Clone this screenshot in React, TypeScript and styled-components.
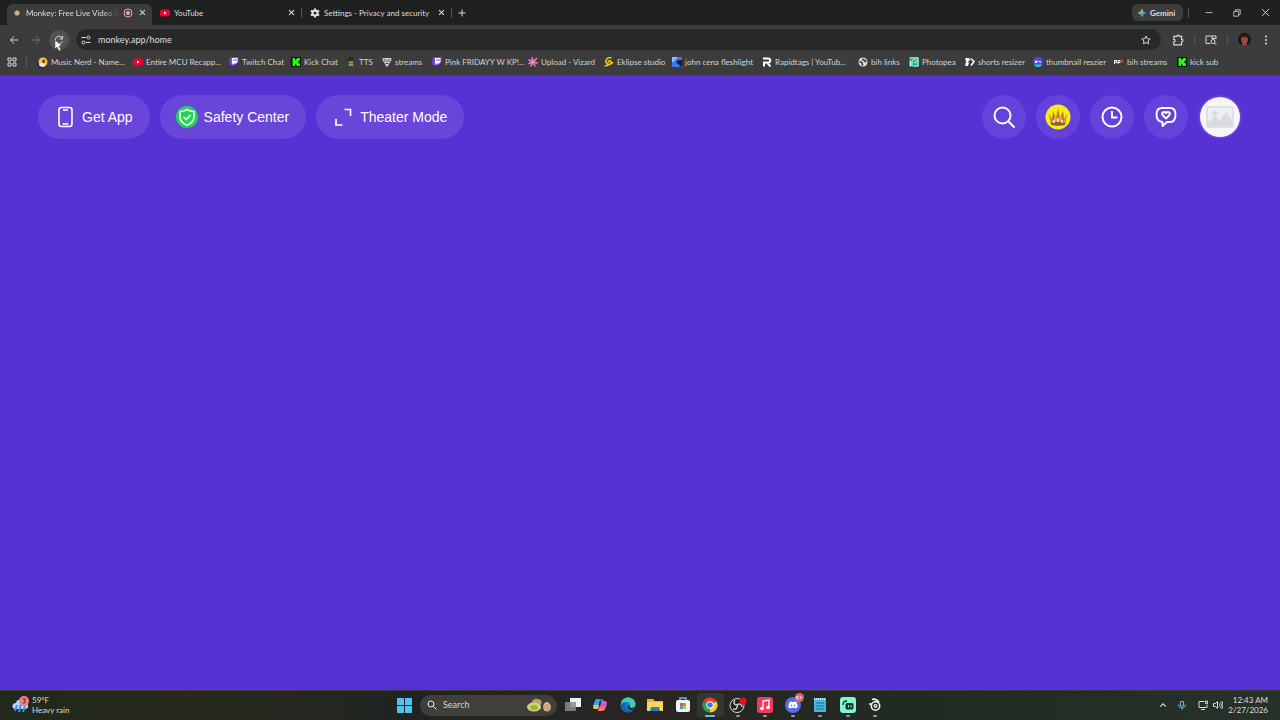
import React from "react";
import styled, { createGlobalStyle } from "styled-components";
import { FaDiscord } from "react-icons/fa";

const ui = `Lato, "Open Sans", sans-serif`;

const GlobalStyle = createGlobalStyle`
  *, *::before, *::after { box-sizing: border-box; }
  body { margin: 0; background: #5730d6; }
  button, input { font: inherit; color: inherit; border: 0; padding: 0; margin: 0; background: none; }
  svg { display: block; flex: none; }
`;

const Screen = styled.div`
  display: flex;
  flex-direction: column;
  min-height: 100vh;
  font-family: ${ui};
  font-size: 8px;
  line-height: 12px;
  color: #dedede;
`;

/* ---------- browser chrome ---------- */

const TabStrip = styled.div`
  display: flex;
  height: 25px;
  padding: 4px 10px 0 7px;
  background: #1f2120;
`;

const Tab = styled.div<{ $active?: boolean; $width: number }>`
  display: flex;
  flex: none;
  align-items: center;
  gap: 4px;
  width: ${(p) => p.$width}px;
  height: 21px;
  padding: 0 5px 4px ${(p) => (p.$active ? 5 : 8)}px;
  border-radius: 6px 6px 0 0;
  background: ${(p) => (p.$active ? "#3c3c3c" : "transparent")};
`;

const TabTitle = styled.span<{ $fade?: boolean }>`
  flex: 1;
  min-width: 0;
  white-space: nowrap;
  ${(p) => p.$fade && "mask-image: linear-gradient(90deg, #000 82%, transparent);"}
`;

const Divider = styled.span`
  flex: none;
  width: 1px;
  height: 10px;
  background: #555655;
`;

const StripDivider = styled(Divider)`
  margin-top: 4px;
`;

const StripEnd = styled.div`
  display: flex;
  flex: 1;
  align-items: center;
  height: 17px;
`;

const IconButton = styled.button<{ $size?: number; $filled?: boolean }>`
  display: flex;
  flex: none;
  align-items: center;
  justify-content: center;
  width: ${(p) => p.$size ?? 10}px;
  height: ${(p) => p.$size ?? 10}px;
  border-radius: 50%;
  background: ${(p) => (p.$filled ? "#525252" : "transparent")};
`;

const NewTab = styled(IconButton)`
  margin: 0 auto 0 5px;
`;

const Gemini = styled.button`
  display: flex;
  align-items: center;
  gap: 3px;
  width: 51px;
  height: 17px;
  margin-right: 5px;
  padding: 0 5px;
  border-radius: 6px;
  background: #3c3d3c;
  font-weight: 700;
`;

const WindowControls = styled.div`
  display: flex;
  align-items: center;
  gap: 18px;
  margin-left: 15px;
`;

const Toolbar = styled.div`
  display: flex;
  align-items: center;
  height: 29px;
  padding: 0 9px 0 3px;
  background: #3c3c3c;
`;

const Reload = styled.div`
  position: relative;
  margin: 0 7px 0 2px;
`;

const Cursor = styled.svg`
  position: absolute;
  left: 6px;
  top: 10px;
`;

const Address = styled.div`
  display: flex;
  flex: 1;
  align-items: center;
  gap: 4px;
  height: 21px;
  padding: 0 10px 0 1px;
  border-radius: 11px;
  background: #282828;
`;

const UrlInput = styled.input`
  flex: 1;
  min-width: 0;
  outline: none;
  font-size: 9px;
`;

const ToolbarEnd = styled.div`
  display: flex;
  align-items: center;
  gap: 10px;
  margin-left: 11px;
`;

const Bookmarks = styled.nav`
  display: flex;
  align-items: center;
  height: 22px;
  padding: 0 8px 5px 7px;
  border-bottom: 1px solid #45398c;
  background: #3c3c3c;
`;

const BookmarkSeparator = styled(Divider)`
  margin: 0 10px 0 9px;
`;

const Bookmark = styled.a<{ $width: number }>`
  display: flex;
  align-items: center;
  gap: 3px;
  width: ${(p) => p.$width}px;
  flex: none;
  white-space: nowrap;
  color: #d4d4d4;
  text-decoration: none;
`;

/* ---------- page ---------- */

const Page = styled.main`
  flex: 1;
  background: #5730d6;
`;

const PageHeader = styled.header`
  display: flex;
  justify-content: space-between;
  padding: 19px 38px;
`;

const Group = styled.div`
  display: flex;
  gap: 10px;
`;

const PillButton = styled.button`
  display: flex;
  align-items: center;
  gap: 6px;
  height: 44px;
  padding: 0 17px 0 16px;
  border-radius: 22px;
  background: #6945da;
  color: #fff;
  font: 14px/20px "Liberation Sans", Arial, sans-serif;
`;

const RoundButton = styled.button`
  display: flex;
  align-items: center;
  justify-content: center;
  width: 44px;
  height: 44px;
  border-radius: 50%;
  background: #6443da;
`;

const AvatarDisc = styled.span`
  display: flex;
  align-items: center;
  justify-content: center;
  width: 40px;
  height: 40px;
  border-radius: 50%;
  background: #f6f6fa;
`;

/* ---------- taskbar ---------- */

const Taskbar = styled.footer`
  display: grid;
  grid-template-columns: 1fr auto 1fr;
  align-items: center;
  height: 30px;
  padding: 0 12px 1px;
  border-top: 1px solid #393b3b;
  background: linear-gradient(90deg, #20291b, #292820 18%, #1f2421 32%, #292523 52%, #202c21 72%, #28302a);
`;

const Weather = styled.button`
  display: flex;
  align-items: center;
  gap: 3px;
  text-align: left;
  line-height: 10px;
`;

const Line = styled.span`
  display: block;
`;

const Center = styled.div`
  display: flex;
  align-items: center;
  padding-left: 6px;
`;

const Search = styled.label`
  display: flex;
  align-items: center;
  gap: 6px;
  width: 137px;
  height: 21px;
  margin: 0 2px 0 8px;
  padding: 0 5px 0 7px;
  border-radius: 11px;
  background: #403f3b;
`;

const SearchInput = styled.input`
  flex: 1;
  min-width: 0;
  outline: none;
  font-size: 9px;
  &::placeholder { color: #d5d5d5; opacity: 1; }
`;

const Apps = styled.div`
  display: flex;
  width: 330px;
`;

const AppButton = styled.button<{ $state?: "open" | "active" }>`
  position: relative;
  display: flex;
  flex: 1;
  align-items: center;
  justify-content: center;
  height: 24px;
  border-radius: 3px;
  background: ${(p) => (p.$state === "active" ? "#343632" : "transparent")};
  &::after {
    content: "";
    display: ${(p) => (p.$state ? "block" : "none")};
    position: absolute;
    bottom: 0;
    width: ${(p) => (p.$state === "active" ? 10 : 4)}px;
    height: 2px;
    border-radius: 1px;
    background: ${(p) => (p.$state === "active" ? "#5cc3ee" : "#9a9b98")};
  }
`;

const Badge = styled.span`
  position: absolute;
  top: 0;
  right: 3px;
  width: 9px;
  height: 9px;
  border-radius: 50%;
  background: #d9656b;
  color: #fff;
  font-size: 6px;
  line-height: 9px;
`;

const DiscordDisc = styled.span`
  display: flex;
  align-items: center;
  justify-content: center;
  width: 16px;
  height: 16px;
  border-radius: 50%;
  background: #5b6be8;
  color: #fff;
`;

const Tray = styled.div`
  display: flex;
  align-items: center;
  justify-content: flex-end;
`;

const TrayIcon = styled(IconButton)<{ $gap: number }>`
  margin-right: ${(p) => p.$gap}px;
`;

const Clock = styled.button`
  width: 40px;
  text-align: right;
  white-space: nowrap;
  line-height: 10px;
`;

/* ---------- icons ---------- */

type LineProps = { d: string; size?: number; w?: number; color?: string };
const Stroke = ({ d, size = 10, w = 2, color = "#d8d8d8" }: LineProps) => (
  <svg width={size} height={size} viewBox="0 0 20 20" fill="none" stroke={color} strokeWidth={w}>
    <path d={d} />
  </svg>
);

const Close = () => <Stroke size={7} w={3} d="M3 3 17 17M17 3 3 17" />;

const MonkeyDot = () => (
  <svg width="10" height="10" viewBox="0 0 20 20">
    <path d="M10 4v12M4 10h12M6 6l8 8M14 6l-8 8" stroke="#8d7655" strokeWidth="2" />
    <circle cx="10" cy="10" r="5" fill="#c8ad84" />
  </svg>
);

const Recording = () => (
  <svg width="10" height="10" viewBox="0 0 20 20" fill="none" stroke="#eda7b1" strokeWidth="2">
    <circle cx="10" cy="10" r="8" />
    <circle cx="10" cy="10" r="4" fill="#f3a9b4" stroke="none" />
  </svg>
);

const YouTube = () => (
  <svg width="10" height="10" viewBox="0 0 20 20">
    <rect y="3" width="20" height="14" rx="5" fill="#f00033" />
    <path d="M8 7v6l5-3z" fill="#fff" />
  </svg>
);

const Twitch = () => (
  <svg width="10" height="10" viewBox="0 0 20 20">
    <path d="M4 0 1 4v12h5v4l4-4h4l5-6V0z" fill="#7c3fe8" />
    <path d="M6 2h11v8l-3 3h-4l-3 3v-3H6z" fill="#fff" />
    <path d="M10 4v4M14 4v4" stroke="#7c3fe8" strokeWidth="2" />
  </svg>
);

const Kick = () => (
  <svg width="10" height="10" viewBox="0 0 20 20">
    <rect width="20" height="20" fill="#061006" />
    <path d="M3 2h5v4h2V4h2V2h6v5h-2v2h-2v2h2v2h2v5h-6v-2h-2v-2H8v4H3z" fill="#2af51b" />
  </svg>
);

const MusicNerd = () => (
  <svg width="11" height="11" viewBox="0 0 22 22">
    <circle cx="9" cy="13" r="9" fill="#262079" />
    <circle cx="12" cy="10" r="9" fill="#f2c744" />
    <path d="M4 17c2-6 5-7 11-4l1 5c-4 3-8 2-12-1z" fill="#f4e9ca" />
    <path d="m12 4 5 4-3 5-4-3z" fill="#6f3f35" />
  </svg>
);

const Agent = () => (
  <svg width="10" height="10" viewBox="0 0 20 20">
    <path d="M6 1h8l3 6H3z" fill="#22222b" />
    <path d="M5 7h10l-1 5H6z" fill="#aaa75d" />
    <path d="M6 13h8l1 5H5z" fill="#8a9a48" />
    <path d="M5 8h10" stroke="#222" strokeWidth="2" />
  </svg>
);

const Streams = () => (
  <svg width="10" height="10" viewBox="0 0 20 20" fill="none" stroke="#d3d3d3" strokeWidth="2">
    <path d="M2 3h16v3l-3 5-5 8-5-8-3-5zM2 6h16M5 11h10M8 15h4" />
    <circle cx="10" cy="8" r="3" />
  </svg>
);

const Vizard = () => (
  <svg width="10" height="10" viewBox="0 0 20 20" stroke="#f186bd" strokeWidth="3" strokeLinecap="round">
    <path d="M10 10 8 2M10 10l7-7M10 10l8 2M10 10l4 8M10 10l-4 8M10 10l-8 3M10 10 2 6" />
  </svg>
);

const Eklipse = () => (
  <svg width="10" height="10" viewBox="0 0 20 20" fill="none" stroke="#f3c62b" strokeWidth="3">
    <path d="M15 2C8-1 2 6 4 11c2 6 10 6 14-1M1 18c7 0 14-5 13-9-2-4-7 0-5 3" />
  </svg>
);

const BlueLogo = () => (
  <svg width="10" height="10" viewBox="0 0 20 20">
    <rect width="20" height="20" fill="#3f78ed" />
    <path d="M20 6v12l-3 2-3-5-6-4 4-5z" fill="#171f46" />
    <path d="M0 0h12L2 10H0z" fill="#8bbcff" />
  </svg>
);

const Rapidtags = () => (
  <svg width="10" height="10" viewBox="0 0 20 20" fill="none" stroke="#fff" strokeWidth="4">
    <path d="M2 3h10c6 0 6 8 0 8H4v8M10 11l7 8" />
  </svg>
);

const Globe = () => (
  <svg width="10" height="10" viewBox="0 0 20 20">
    <circle cx="10" cy="10" r="9" fill="#dcdcdc" />
    <path d="M3 9l5 2v3l2 3M10 3v3h3l1 3 3-1" fill="none" stroke="#3c3c3c" strokeWidth="3" />
  </svg>
);

const Photopea = () => (
  <svg width="10" height="10" viewBox="0 0 20 20">
    <rect width="20" height="20" rx="3" fill="#18a884" />
    <path
      d="M2 2h16v16H9M3 18V8M6 18V9c0-5 9-5 9 0 0 4-5 4-5 1"
      fill="none"
      stroke="#d9fff3"
      strokeWidth="2"
    />
  </svg>
);

const Shorts = () => (
  <svg width="10" height="10" viewBox="0 0 20 20">
    <path d="M1 2h7l2 4-4 4 2 3-3 5H1v-6l2-2-2-3z" fill="#fff" />
    <path d="m11 3 7 6-6 8" fill="none" stroke="#fff" strokeWidth="3" />
  </svg>
);

const Thumbnail = () => (
  <svg width="10" height="10" viewBox="0 0 20 20">
    <circle cx="10" cy="10" r="10" fill="#4d4be0" />
    <path d="M2 15h16c-4 7-12 7-16 0z" fill="#22c6c4" />
    <path d="M5 8h3v3H5zM11 9h4v2" fill="none" stroke="#fff" strokeWidth="2" />
  </svg>
);

const Pipes = () => (
  <svg width="10" height="10" viewBox="0 0 20 20" fill="none" strokeWidth="2">
    <path d="M1 14V7h4v4H1M8 14V7h4v4H8" stroke="#fff" />
    <path d="M14 7h5M16 7v5" stroke="#e5464c" />
  </svg>
);

const bookmarks: [string, number, React.FC][] = [
  ["Music Nerd - Name...", 96, MusicNerd],
  ["Entire MCU Recapp...", 96, YouTube],
  ["Twitch Chat", 62, Twitch],
  ["Kick Chat", 55, Kick],
  ["TTS", 36, Agent],
  ["streams", 50, Streams],
  ["Pink FRIDAYY W KP!...", 96, Twitch],
  ["Upload - Vizard", 76, Vizard],
  ["Eklipse studio", 68, Eklipse],
  ["john cena fleshlight", 90, BlueLogo],
  ["Rapidtags | YouTub...", 96, Rapidtags],
  ["bih links", 51, Globe],
  ["Photopea", 56, Photopea],
  ["shorts resizer", 68, Shorts],
  ["thumbnail reszier", 81, Thumbnail],
  ["bih streams", 63, Pipes],
  ["kick sub", 50, Kick],
];

const Sparkle = () => (
  <svg width="10" height="10" viewBox="0 0 20 20">
    <defs>
      <linearGradient id="spark" x1="0" y1="0" x2="1" y2="1">
        <stop offset="0" stopColor="#f0584b" />
        <stop offset=".35" stopColor="#e9b93b" />
        <stop offset=".5" stopColor="#45a6c8" />
        <stop offset="1" stopColor="#3f8cff" />
      </linearGradient>
    </defs>
    <path d="M10 0c1 6 4 9 10 10-6 1-9 4-10 10C9 14 6 11 0 10 6 9 9 6 10 0z" fill="url(#spark)" />
  </svg>
);

const Gear = () => (
  <svg width="10" height="10" viewBox="0 0 20 20" stroke="#e3e3e3" strokeWidth="4">
    <circle cx="10" cy="10" r="5" fill="none" />
    <path d="M10 1v4M10 15v4M2 5l4 3M14 12l4 3M2 15l4-3M14 8l4-3" />
  </svg>
);

const ProfileFace = () => (
  <svg width="13" height="13" viewBox="0 0 26 26">
    <circle cx="13" cy="13" r="13" fill="#171717" />
    <circle cx="13" cy="13" r="7" fill="#a4584b" />
    <path d="M6 11c2-7 12-7 14 0-4-3-10-3-14 0z" fill="#4a211d" />
    <path d="M9 14h3M15 14h3" stroke="#2a1715" strokeWidth="2" />
    <path d="M7 24c0-7 12-7 12 0-4 2-8 2-12 0z" fill="#b53a34" />
  </svg>
);

const SiteSettings = () => (
  <svg width="10" height="10" viewBox="0 0 20 20" fill="none" stroke="#d8d8d8" strokeWidth="2">
    <path d="M10 5H1M10 15h9" />
    <circle cx="15" cy="5" r="3" />
    <circle cx="5" cy="15" r="3" />
  </svg>
);

const Phone = () => (
  <svg width="22" height="22" viewBox="0 0 22 22" fill="none" stroke="#fff" strokeWidth="1.6">
    <rect x="5" y="1.5" width="13" height="19" rx="2.5" />
    <path d="M9 4h5M8.500 18h6" />
  </svg>
);

const Shield = () => (
  <svg width="22" height="22" viewBox="0 0 22 22" fill="none" stroke="#e9ffe9" strokeWidth="1.7">
    <circle cx="11" cy="11" r="11" fill="#1fd45c" stroke="none" />
    <path d="M11 3.500c2.200 1.400 4.500 2 7 2v5c0 4.500-2.500 7-7 8.800-4.500-1.800-7-4.300-7-8.800v-5c2.500 0 4.800-.6 7-2z" />
    <path d="m7.500 11 2.600 2.600 4.600-4.800" />
  </svg>
);

const Theater = () => (
  <svg width="22" height="22" viewBox="0 0 22 22" fill="none" stroke="#fff" strokeWidth="1.7">
    <path d="M12.500 3.500h6V10M4 13v6h6.500" />
  </svg>
);

const Crown = () => (
  <svg width="26" height="26" viewBox="0 0 26 26">
    <circle cx="13" cy="13" r="12.5" fill="#f8ee12" />
    <path d="m4 10 3 5 1-8 3 7 2-10 2 10 3-7 1 8 3-5-2 11H6z" fill="#b97b2c" />
    <path d="m5 13 3 5 2-7 3 6 3-6 2 7 3-5-2 7H7z" fill="#e2aa45" />
    <path d="M6 19c4-2 10-2 14 0v2c-4 1-10 1-14 0z" fill="#8e6037" />
    <path d="M9 19v-3M13 18v-4M17 19v-3" stroke="#fff0ba" strokeWidth="1.5" />
  </svg>
);

const Picture = () => (
  <svg width="28" height="22" viewBox="0 0 28 22">
    <rect x="1" y="1" width="26" height="20" rx="1" fill="#eeeff1" stroke="#d9dade" strokeWidth="1.5" />
    <circle cx="9" cy="7" r="2.5" fill="#d9dade" />
    <path d="M2 20v-4l7-6 5 5 6-9 6 8v6z" fill="#d9dade" />
  </svg>
);

const Magnifier = () => (
  <svg width="24" height="24" viewBox="0 0 24 24" fill="none" stroke="#fff" strokeWidth="2">
    <circle cx="10.5" cy="10.5" r="8" />
    <path d="m16.500 16.500 6 6" />
  </svg>
);

const History = () => (
  <svg width="24" height="24" viewBox="0 0 24 24" fill="none" stroke="#fff" strokeWidth="1.9">
    <circle cx="12" cy="12" r="9.5" />
    <path d="M12 6v6.500h5.500" />
  </svg>
);

const HeartChat = () => (
  <svg width="24" height="24" viewBox="0 0 24 24" fill="none" stroke="#fff" strokeWidth="1.9" strokeLinejoin="round">
    <path d="M8 3h8c4 0 5.500 2.500 5.500 6.500S20 17 16 17h-3l-4.500 4V17C4.500 17 2.500 14 2.500 9.500S4.500 3 8 3z" />
    <path d="M12 13.500 8.700 10.300c-1.700-2.500 1.300-4.500 3.300-2.300 2-2.200 5-.2 3.300 2.300z" />
  </svg>
);

const WeatherIcon = () => (
  <svg width="17" height="20" viewBox="0 0 17 20">
    <path d="M3 14c-4-1-3-6 1-6 1-5 8-4 9 0 4 0 4 5 1 6z" fill="#b9d8f5" />
    <path d="m5 10-2 6M9 9l-2 8M13 11l-2 6" stroke="#3e91ec" strokeWidth="2" />
    <circle cx="12" cy="6" r="5" fill="#ef7f86" />
    <path d="M10.500 4h3l-1.500 2c2 0 2 2.500-1.500 2" fill="none" stroke="#7b2735" />
  </svg>
);

const Windows = () => (
  <svg width="15" height="15" viewBox="0 0 15 15">
    <path d="M0 0h7v7H0zM8 0h7v7H8zM0 8h7v7H0zM8 8h7v7H8z" fill="#4fc3f1" />
  </svg>
);

const Fruit = () => (
  <svg width="25" height="15" viewBox="0 0 25 15">
    <path d="M4 6C5 0 12-1 15 4l-3 6-9 2z" fill="#b3a362" />
    <ellipse cx="7" cy="9" rx="7" ry="4.5" fill="#d9cf83" />
    <ellipse cx="7" cy="9.5" rx="4" ry="2.5" fill="#8fbf23" />
    <ellipse cx="20" cy="9" rx="4" ry="4.5" fill="#d3a678" />
    <path d="M17 7c1-2 3-3 4-2" stroke="#f2d9b4" fill="none" />
  </svg>
);

const TaskView = () => (
  <svg width="16" height="16" viewBox="0 0 16 16">
    <path d="M5 1h11v9H5z" fill="#f1f1f1" />
    <path d="M0 5h11v9H0z" fill="#8b8b8b" opacity=".85" />
  </svg>
);

const Copilot = () => (
  <svg width="16" height="16" viewBox="0 0 16 16">
    <path d="M4 2h4L6 12H3C0 12 1 9 2 6z" fill="#31a6ec" />
    <path d="M2 8h5l-1 4H3c-2 0-2-2-1-4z" fill="#f2c145" />
    <path d="M8 2h3l2 3-4 2z" fill="#4268ea" />
    <path d="M10 4h3c3 0 2 3 1 6s-2 4-4 4H6z" fill="#d65abf" />
    <path d="m7 10-1 4h4c1 0 2-1 3-3z" fill="#fa775b" />
  </svg>
);

const Edge = () => (
  <svg width="16" height="16" viewBox="0 0 16 16">
    <circle cx="8" cy="8" r="7.5" fill="#1683cf" />
    <path d="M1 7C2-2 15-1 15.500 7c0 3-3 4-6 3 2-3-1-6-4-5-2 0-4 1-4.500 2z" fill="#46cbb0" />
    <path d="M6 6c-3 4 1 9 7 7-4 5-11 1-12-3 0-3 2-5 5-4z" fill="#1261b1" />
    <path d="M9.500 10c2 2 5 1 6-1-.3 1.600-1 3-2 4-3 1-6-1-6-3 0-2 3-3 2 0z" fill="#27312c" />
  </svg>
);

const Folder = () => (
  <svg width="16" height="16" viewBox="0 0 16 16">
    <path d="M0 2h6l2 2h8v10H0z" fill="#e8b52e" />
    <path d="M0 5h16v9H0z" fill="#fbd75b" />
    <path d="M4 10h8l1 4H3z" fill="#267fbe" />
  </svg>
);

const Store = () => (
  <svg width="16" height="16" viewBox="0 0 16 16">
    <path d="M5 4V1h6v3" fill="none" stroke="#65bbe4" strokeWidth="1.5" />
    <rect x="1" y="3" width="14" height="12" rx="2" fill="#f3f3f3" />
    <path d="M5 6h3v3H5z" fill="#ed563b" />
    <path d="M8 6h3v3H8z" fill="#76b947" />
    <path d="M5 9h3v3H5z" fill="#38a2e2" />
    <path d="M8 9h3v3H8z" fill="#f3b82c" />
  </svg>
);

const Chrome = () => (
  <svg width="16" height="16" viewBox="0 0 16 16">
    <path d="M8 8 1.500 4.200a7.500 7.500 0 0 1 13 0z" fill="#e6402f" />
    <path d="M8 8 14.500 4.200A7.500 7.500 0 0 1 8 15.500z" fill="#fbcb2b" />
    <path d="M8 8v7.500A7.500 7.500 0 0 1 1.500 4.200z" fill="#2f9e4d" />
    <circle cx="8" cy="8" r="3.7" fill="#fff" />
    <circle cx="8" cy="8" r="2.8" fill="#3a7eea" />
  </svg>
);

const Obs = () => (
  <svg width="18" height="16" viewBox="0 0 18 16">
    <circle cx="8" cy="8.5" r="7" fill="#202020" stroke="#ddd" />
    <path d="M8 8C5 8 4 5 6 3M8 8c2-2 5-1 5 2M8 8c1 3-1 5-4 4" stroke="#ccc" strokeWidth="1.5" fill="none" />
    <circle cx="14" cy="4" r="3.5" fill="#e80d16" />
  </svg>
);

const Music = () => (
  <svg width="16" height="16" viewBox="0 0 16 16">
    <rect width="16" height="16" rx="3" fill="#f33a5d" />
    <path d="M6 11V4l6-1v7" fill="none" stroke="#fff" strokeWidth="1.3" />
    <circle cx="5" cy="11.5" r="1.8" fill="#fff" />
    <circle cx="11" cy="10.5" r="1.8" fill="#fff" />
  </svg>
);

const Notepad = () => (
  <svg width="14" height="16" viewBox="0 0 14 16">
    <rect x="1" y="1" width="12" height="14" rx="1" fill="#45b7dc" />
    <path d="M1 2h12" stroke="#c4eef9" strokeWidth="2" strokeDasharray="1 1" />
    <path d="M3 6h8M3 9h8M3 12h8" stroke="#176d95" />
  </svg>
);

const Streamlabs = () => (
  <svg width="16" height="16" viewBox="0 0 16 16">
    <rect width="16" height="16" rx="3" fill="#80f5d2" />
    <rect x="5.5" y="6" width="8" height="6.5" rx="1.5" fill="#17342f" />
    <path d="M3 8c0-3 1-4 4-4" fill="none" stroke="#17342f" strokeWidth="1.3" />
    <path d="M8.500 8v2.500M11 8v2.500" stroke="#80f5d2" />
  </svg>
);

const SteelSeries = () => (
  <svg width="16" height="16" viewBox="0 0 16 16" fill="none" stroke="#f2f2f2">
    <circle cx="8.5" cy="9" r="4.2" strokeWidth="1.6" />
    <circle cx="8.5" cy="9" r="1.4" strokeWidth="1.2" />
    <path d="M5 2.500c3-1 5 0 7 3M2 7h3" strokeWidth="1.6" />
  </svg>
);

const Discord = () => (
  <>
    <DiscordDisc>
      <FaDiscord size={10} />
    </DiscordDisc>
    <Badge>9+</Badge>
  </>
);

const apps: [string, React.FC, ("open" | "active")?][] = [
  ["Task view", TaskView],
  ["Copilot", Copilot],
  ["Edge", Edge],
  ["File Explorer", Folder],
  ["Store", Store],
  ["Chrome", Chrome, "active"],
  ["OBS Studio", Obs, "open"],
  ["Music", Music, "open"],
  ["Discord", Discord, "open"],
  ["Notepad", Notepad, "open"],
  ["Streamlabs", Streamlabs, "open"],
  ["SteelSeries", SteelSeries, "open"],
];

export default function App() {
  return (
    <Screen>
      <GlobalStyle />

      <TabStrip>
        <Tab $active $width={145}>
          <MonkeyDot />
          <TabTitle $fade>Monkey: Free Live Video C</TabTitle>
          <Recording />
          <IconButton aria-label="Close Monkey tab"><Close /></IconButton>
        </Tab>
        <Tab $width={149}>
          <YouTube />
          <TabTitle>YouTube</TabTitle>
          <IconButton aria-label="Close YouTube tab"><Close /></IconButton>
        </Tab>
        <StripDivider />
        <Tab $width={149}>
          <Gear />
          <TabTitle>Settings - Privacy and security</TabTitle>
          <IconButton aria-label="Close Settings tab"><Close /></IconButton>
        </Tab>
        <StripEnd>
          <Divider />
          <NewTab aria-label="New tab"><Stroke w={2} d="M10 3v14M3 10h14" /></NewTab>
          <Gemini><Sparkle />Gemini</Gemini>
          <Divider />
          <WindowControls>
            <IconButton aria-label="Minimize"><Stroke size={8} d="M1 9h18" /></IconButton>
            <IconButton aria-label="Restore"><Stroke size={8} d="M2 6h12v12H2zM6 5V2h12v12h-3" /></IconButton>
            <IconButton aria-label="Close window"><Stroke size={9} d="M2 2l16 16M18 2 2 18" /></IconButton>
          </WindowControls>
        </StripEnd>
      </TabStrip>

      <Toolbar>
        <IconButton $size={22} aria-label="Back"><Stroke d="M18 10H3M10 3l-7 7 7 7" /></IconButton>
        <IconButton $size={22} aria-label="Forward"><Stroke color="#757575" d="M2 10h15M10 3l7 7-7 7" /></IconButton>
        <Reload>
          <IconButton $size={20} $filled aria-label="Reload">
            <Stroke d="M17 7A7.500 7.500 0 1 0 17 13M17 2v6h-6" />
          </IconButton>
          <Cursor width="8" height="11" viewBox="0 0 8 11">
            <path d="M0 0v9l2-2 2 4 2-1-2-4h3z" fill="#fff" stroke="#333" strokeWidth=".5" />
          </Cursor>
        </Reload>
        <Address>
          <IconButton $size={17} aria-label="Site settings"><SiteSettings /></IconButton>
          <UrlInput aria-label="Address" defaultValue="monkey.app/home" />
          <IconButton aria-label="Bookmark this page">
            <Stroke d="M10 2l2.400 5.400 5.900.6-4.400 4 1.300 5.900L10 15l-5.200 2.900 1.300-5.900-4.400-4 5.900-.6z" />
          </IconButton>
        </Address>
        <ToolbarEnd>
          <IconButton $size={12} aria-label="Extensions">
            <Stroke size={12} d="M3 4h5c0-3 4-3 4 0h4v5c3 0 3 4 0 4v5H3v-5c3 0 3-4 0-4z" />
          </IconButton>
          <Divider />
          <IconButton $size={12} aria-label="Search tabs">
            <svg width="12" height="12" viewBox="0 0 24 24" fill="none" stroke="#d8d8d8" strokeWidth="2">
              <path d="M11 19H2V4h20v6M14 4v5h8" />
              <circle cx="16" cy="15" r="4" />
              <path d="m19 18 4 4" />
            </svg>
          </IconButton>
          <Divider />
          <IconButton $size={13} aria-label="Profile"><ProfileFace /></IconButton>
          <IconButton aria-label="Menu">
            <svg width="10" height="10" viewBox="0 0 20 20" fill="#d8d8d8">
              <circle cx="10" cy="3" r="2" />
              <circle cx="10" cy="10" r="2" />
              <circle cx="10" cy="17" r="2" />
            </svg>
          </IconButton>
        </ToolbarEnd>
      </Toolbar>

      <Bookmarks aria-label="Bookmarks">
        <IconButton aria-label="All apps">
          <Stroke d="M2 2h6v6H2zM12 2h6v6h-6zM2 12h6v6H2zM12 12h6v6h-6z" />
        </IconButton>
        <BookmarkSeparator />
        {bookmarks.map(([label, width, Icon]) => (
          <Bookmark key={label} href="#" $width={width}>
            <Icon />
            {label}
          </Bookmark>
        ))}
      </Bookmarks>

      <Page>
        <PageHeader>
          <Group>
            <PillButton><Phone />Get App</PillButton>
            <PillButton><Shield />Safety Center</PillButton>
            <PillButton><Theater />Theater Mode</PillButton>
          </Group>
          <Group>
            <RoundButton aria-label="Search"><Magnifier /></RoundButton>
            <RoundButton aria-label="Premium"><Crown /></RoundButton>
            <RoundButton aria-label="History"><History /></RoundButton>
            <RoundButton aria-label="Messages"><HeartChat /></RoundButton>
            <RoundButton aria-label="Account"><AvatarDisc><Picture /></AvatarDisc></RoundButton>
          </Group>
        </PageHeader>
      </Page>

      <Taskbar>
        <Weather>
          <WeatherIcon />
          <span><Line>59°F</Line><Line>Heavy rain</Line></span>
        </Weather>
        <Center>
          <IconButton $size={15} aria-label="Start"><Windows /></IconButton>
          <Search>
            <Stroke color="#eee" d="M14 8A6 6 0 1 1 2 8a6 6 0 0 1 12 0zM12.500 12.500 19 19" />
            <SearchInput aria-label="Search" placeholder="Search" />
            <Fruit />
          </Search>
          <Apps>
            {apps.map(([name, Icon, state]) => (
              <AppButton key={name} aria-label={name} $state={state}><Icon /></AppButton>
            ))}
          </Apps>
        </Center>
        <Tray>
          <TrayIcon $gap={9} aria-label="Hidden icons"><Stroke size={8} w={3} d="M3 14l7-7 7 7" /></TrayIcon>
          <TrayIcon $gap={11} aria-label="Microphone">
            <Stroke color="#62bde0" d="M7 3h6v9H7zM3 9c0 9 14 9 14 0M10 15v4" />
          </TrayIcon>
          <TrayIcon $gap={5} aria-label="Network"><Stroke d="M13 3H2v12h16V9M6 19h8M15 2h4v5h-4z" /></TrayIcon>
          <TrayIcon $gap={5} aria-label="Volume">
            <Stroke d="M1 7h4l4-4v14l-4-4H1zM12 7c2 2 2 4 0 6M14 4c4 4 4 8 0 12M17 2c4 5 4 11 0 16" />
          </TrayIcon>
          <Clock><Line>12:43 AM</Line><Line>2/27/2026</Line></Clock>
        </Tray>
      </Taskbar>
    </Screen>
  );
}
